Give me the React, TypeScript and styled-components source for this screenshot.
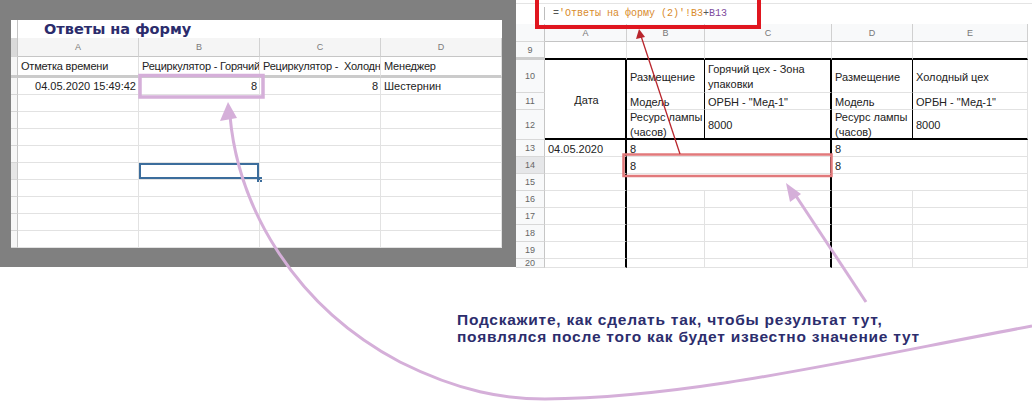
import React from 'react';
import styled, { createGlobalStyle } from 'styled-components';

const GlobalStyle = createGlobalStyle`
  html, body {
    margin: 0;
    padding: 0;
    background: #fff;
  }
  body {
    font-family: 'Liberation Sans', Arial, sans-serif;
  }
  * {
    box-sizing: border-box;
  }
`;

type Align = 'left' | 'right' | 'center';

const justify = (a?: Align) => (a === 'right' ? 'flex-end' : a === 'center' ? 'center' : 'flex-start');

const Page = styled.div`
  position: relative;
  width: 1032px;
  height: 416px;
  overflow: hidden;
  background: #fff;
`;

const TopRow = styled.div`
  display: flex;
  height: 268px;
`;

/* ---------- left screenshot: the form responses sheet ---------- */

const LeftPanel = styled.div`
  width: 516px;
  height: 267px;
  background: #808080;
  padding: 20px 14px 19px 11px;
`;

const FormSheet = styled.div`
  display: grid;
  grid-template-columns: 7px repeat(4, 121px);
  grid-template-rows: 18px 19px 21px repeat(10, 17px);
  height: 100%;
  background: #fff;
  overflow: hidden;
`;

const Strip = styled.div<{ $tone?: 'plain' | 'head' | 'active'; $frozen?: boolean }>`
  background: ${(p) => (p.$tone === 'head' ? '#dadada' : p.$tone === 'active' ? '#e6e6e6' : p.$tone === 'plain' ? '#fff' : '#f7f7f7')};
  border-right: 1px solid #c4c4c4;
  border-bottom: ${(p) => (p.$frozen ? '3px solid #cbcbcb' : p.$tone === 'plain' ? 'none' : '1px solid #d6d6d6')};
`;

const TitleCell = styled.div`
  grid-column: span 4;
  display: flex;
  align-items: center;
  padding-left: 26px;
  font-family: 'DejaVu Sans', Verdana, sans-serif;
  font-weight: bold;
  font-size: 14.5px;
  color: #2b2c6c;
  white-space: nowrap;
`;

const ColHead = styled.div`
  display: flex;
  align-items: center;
  justify-content: center;
  background: #f5f5f5;
  border-right: 1px solid #d2d2d2;
  border-bottom: 1px solid #c6c6c6;
  font-size: 9px;
  color: #7a7a7a;
`;

const Cell = styled.div<{ $align?: Align; $frozen?: boolean; $selected?: boolean }>`
  position: relative;
  display: flex;
  align-items: center;
  justify-content: ${(p) => justify(p.$align)};
  padding: 0 ${(p) => (p.$align === 'right' ? '2px' : '0')} 0 3px;
  border-right: 1px solid #e2e2e2;
  border-bottom: ${(p) => (p.$frozen ? '3px solid #cbcbcb' : '1px solid #e2e2e2')};
  font-size: 11px;
  letter-spacing: ${(p) => (p.$frozen ? '-0.2px' : '0')};
  color: #222;
  white-space: nowrap;
  overflow: ${(p) => (p.$selected ? 'visible' : 'hidden')};
  box-shadow: ${(p) => (p.$selected ? 'inset 0 0 0 2px #3c6d9c' : 'none')};

  &::after {
    content: '';
    display: ${(p) => (p.$selected ? 'block' : 'none')};
    position: absolute;
    right: -3px;
    bottom: -3px;
    width: 5px;
    height: 5px;
    background: #3c6d9c;
  }
`;

/* ---------- right screenshot: the report sheet ---------- */

const RightPanel = styled.div`
  flex: 1;
  height: 268px;
  display: flex;
  flex-direction: column;
  background: #fff;
  overflow: hidden;
`;

const FormulaBar = styled.div`
  height: 24px;
  flex: none;
  display: flex;
  align-items: center;
  padding: 3px 0 0 28px;
  background: linear-gradient(#fff 3px, #e4e4e4 3px, #e4e4e4 4px, #fff 4px);
`;

const Caret = styled.span`
  width: 1px;
  height: 13px;
  margin-right: 8px;
  background: #bdbdbd;
`;

const Formula = styled.span`
  font-family: 'Liberation Mono', 'Courier New', monospace;
  font-size: 10px;
  white-space: pre;
`;

const Token = styled.span<{ $tone: 'plain' | 'ref' | 'own' }>`
  color: ${(p) => (p.$tone === 'ref' ? '#d98b2b' : p.$tone === 'own' ? '#7e4a9c' : '#555')};
`;

const ReportGrid = styled.div`
  flex: 1;
  display: grid;
  grid-template-columns: 29px 82px 78px 127px 81px 115px 4px;
  grid-template-rows: 18px 18px 33px 17px 30px repeat(7, 17px) 9px;
  overflow: hidden;
`;

type Line = 'thin' | 'bold' | 'black' | 'none';

const line = (l?: Line) =>
  l === 'bold' ? '2px solid #000' : l === 'black' ? '1px solid #000' : l === 'none' ? 'none' : '1px solid #e2e2e2';

const GCell = styled.div<{
  $row: number;
  $col: number;
  $rs?: number;
  $cs?: number;
  $right?: Line;
  $bottom?: Line;
  $align?: Align;
  $wrap?: boolean;
}>`
  grid-row: ${(p) => p.$row} / span ${(p) => p.$rs ?? 1};
  grid-column: ${(p) => p.$col} / span ${(p) => p.$cs ?? 1};
  display: flex;
  align-items: center;
  justify-content: ${(p) => justify(p.$align)};
  padding: 1px 0 0 3px;
  border-right: ${(p) => line(p.$right)};
  border-bottom: ${(p) => line(p.$bottom)};
  font-size: 11px;
  line-height: ${(p) => (p.$wrap ? '15px' : '16px')};
  color: #222;
  white-space: ${(p) => (p.$wrap ? 'normal' : 'nowrap')};
  overflow: hidden;
`;

const RowNum = styled.div<{ $row: number; $active?: boolean; $frozen?: boolean }>`
  grid-row: ${(p) => p.$row};
  grid-column: 1;
  display: flex;
  align-items: center;
  justify-content: center;
  background: ${(p) => (p.$active ? '#e6e7e9' : '#f8f9fa')};
  border-right: 1px solid #c6c6c6;
  border-bottom: ${(p) => (p.$frozen ? '3px solid #cdcdcd' : '1px solid #d8d8d8')};
  font-size: 9px;
  color: #666;
`;

const LetterHead = styled.div<{ $col: number }>`
  grid-row: 1;
  grid-column: ${(p) => p.$col};
  display: flex;
  align-items: center;
  justify-content: center;
  background: #f8f9fa;
  border-right: 1px solid #d0d0d0;
  border-bottom: 1px solid #c4c4c4;
  font-size: 9px;
  color: #777;
`;

/* ---------- annotations ---------- */

const Caption = styled.p`
  margin: 43px 0 0 457px;
  font-family: 'Liberation Sans', Arial, sans-serif;
  font-weight: bold;
  font-size: 15.5px;
  letter-spacing: 0.75px;
  line-height: 17px;
  color: #2c2d6d;
  white-space: nowrap;
`;

const Overlay = styled.svg`
  position: absolute;
  left: 0;
  top: 0;
  pointer-events: none;
`;

const lilac = '#d5afd9';

const emptyRows = Array.from({ length: 9 }, (_, i) => i);

const FormResponses = () => (
  <LeftPanel>
    <FormSheet>
      <Strip $tone="plain" />
      <TitleCell>Ответы на форму</TitleCell>

      <Strip $tone="head" />
      {['A', 'B', 'C', 'D'].map((l) => (
        <ColHead key={l}>{l}</ColHead>
      ))}

      <Strip $frozen />
      <Cell $frozen>Отметка времени</Cell>
      <Cell $frozen>Рециркулятор - Горячий цех</Cell>
      <Cell $frozen>Рециркулятор -&nbsp; Холодный цех</Cell>
      <Cell $frozen>Менеджер</Cell>

      <Strip />
      <Cell $align="right">04.05.2020 15:49:42</Cell>
      <Cell $align="right">8</Cell>
      <Cell $align="right">8</Cell>
      <Cell>Шестернин</Cell>

      {emptyRows.map((i) => (
        <React.Fragment key={i}>
          <Strip $tone={i === 4 ? 'active' : undefined} />
          <Cell />
          <Cell $selected={i === 4} />
          <Cell />
          <Cell />
        </React.Fragment>
      ))}
    </FormSheet>
  </LeftPanel>
);

const Report = () => {
  const tail = [9, 10, 11, 12, 13];
  return (
    <RightPanel>
      <FormulaBar>
        <Caret />
        <Formula>
          <Token $tone="plain">=</Token>
          <Token $tone="ref">'Ответы на форму (2)'!B3</Token>
          <Token $tone="plain">+</Token>
          <Token $tone="own">B13</Token>
        </Formula>
      </FormulaBar>

      <ReportGrid>
        <RowNum $row={1} />
        {['A', 'B', 'C', 'D', 'E'].map((l, i) => (
          <LetterHead key={l} $col={i + 2}>
            {l}
          </LetterHead>
        ))}

        {/* row 9 */}
        <RowNum $row={2} $frozen>
          9
        </RowNum>
        {[2, 3, 4, 5, 6].map((c) => (
          <GCell key={c} $row={2} $col={c} $bottom="bold" />
        ))}

        {/* rows 10-12: headers of the two recirculators */}
        <RowNum $row={3}>10</RowNum>
        <RowNum $row={4}>11</RowNum>
        <RowNum $row={5}>12</RowNum>
        <GCell $row={3} $col={2} $rs={3} $right="bold" $bottom="bold" $align="center">
          Дата
        </GCell>

        <GCell $row={3} $col={3} $right="black">
          Размещение
        </GCell>
        <GCell $row={3} $col={4} $right="bold" $wrap>
          Горячий цех - Зона упаковки
        </GCell>
        <GCell $row={3} $col={5} $right="black">
          Размещение
        </GCell>
        <GCell $row={3} $col={6}>Холодный цех</GCell>

        <GCell $row={4} $col={3} $right="black">
          Модель
        </GCell>
        <GCell $row={4} $col={4} $right="bold">
          ОРБН - "Мед-1"
        </GCell>
        <GCell $row={4} $col={5} $right="black">
          Модель
        </GCell>
        <GCell $row={4} $col={6}>ОРБН - "Мед-1"</GCell>

        <GCell $row={5} $col={3} $right="black" $bottom="bold" $wrap>
          Ресурс лампы (часов)
        </GCell>
        <GCell $row={5} $col={4} $right="bold" $bottom="bold">
          8000
        </GCell>
        <GCell $row={5} $col={5} $right="black" $bottom="bold" $wrap>
          Ресурс лампы (часов)
        </GCell>
        <GCell $row={5} $col={6} $bottom="bold">
          8000
        </GCell>

        {/* rows 13-15: merged value cells */}
        <RowNum $row={6}>13</RowNum>
        <RowNum $row={7} $active>
          14
        </RowNum>
        <RowNum $row={8}>15</RowNum>
        {[6, 7, 8].map((r) => (
          <React.Fragment key={r}>
            <GCell $row={r} $col={2} $right="bold">
              {r === 6 ? '04.05.2020' : ''}
            </GCell>
            <GCell $row={r} $col={3} $cs={2} $right="bold">
              {r < 8 ? '8' : ''}
            </GCell>
            <GCell $row={r} $col={5} $cs={2}>
              {r < 8 ? '8' : ''}
            </GCell>
          </React.Fragment>
        ))}

        {/* rows 16-20 */}
        {tail.map((r) => (
          <React.Fragment key={r}>
            <RowNum $row={r}>{r + 7}</RowNum>
            <GCell $row={r} $col={2} $right="bold" />
            <GCell $row={r} $col={3} />
            <GCell $row={r} $col={4} $right="bold" />
            <GCell $row={r} $col={5} />
            <GCell $row={r} $col={6} />
          </React.Fragment>
        ))}
      </ReportGrid>
    </RightPanel>
  );
};

const Annotations = () => (
  <Overlay width={1032} height={416} viewBox="0 0 1032 416">
    {/* lilac frame on the source value and the long curved arrow */}
    <rect x={140} y={75.5} width={123} height={21.5} fill="none" stroke={lilac} strokeWidth={3.5} />
    <path
      d="M230,116 C238,205 292,305 400,362 C460,392 505,399 545,399 C690,398 850,360 1032,326"
      fill="none"
      stroke={lilac}
      strokeWidth={3}
    />
    <polygon points="228,102 220,121 237,118" fill={lilac} />

    {/* straight lilac arrow from the question to the target row */}
    <line x1={866} y1={302} x2={796} y2={196} stroke={lilac} strokeWidth={3} />
    <polygon points="786,183 801,194 790,202" fill={lilac} />

    {/* red frame around the formula and the target row */}
    <rect x={537} y={-4} width={222} height={31} fill="none" stroke="#e0161f" strokeWidth={4} />
    <rect x={623.5} y={154.5} width={208} height={21.5} fill="none" stroke="#e2797b" strokeWidth={2.5} />
    <line x1={680} y1={154} x2={641} y2={36} stroke="#b9262d" strokeWidth={1.3} />
    <polygon points="639,29 636,39 645,37" fill="#b9262d" />
  </Overlay>
);

export default function App() {
  return (
    <Page>
      <GlobalStyle />
      <TopRow>
        <FormResponses />
        <Report />
      </TopRow>
      <Caption>
        Подскажите, как сделать так, чтобы результат тут,
        <br />
        появлялся после того как будет известно значение тут
      </Caption>
      <Annotations />
    </Page>
  );
}
